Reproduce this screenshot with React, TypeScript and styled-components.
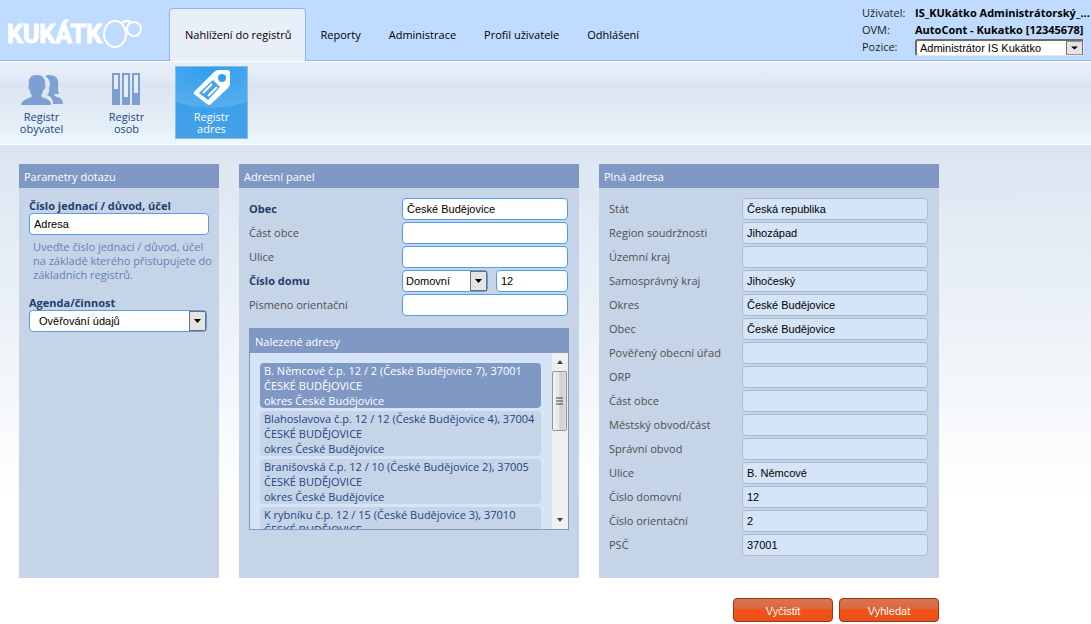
import React, { useId } from 'react';
import styled, { createGlobalStyle, css } from 'styled-components';

const sans = '"Open Sans", "Segoe UI", "Noto Sans", sans-serif';
const arial = '"Liberation Sans", Arial, sans-serif';

const GlobalStyle = createGlobalStyle`
  *, *::before, *::after { box-sizing: border-box; }
  body {
    margin: 0;
    font: 11px/16px ${sans};
    color: #505050;
    background: #fff linear-gradient(#dbe5f1 145px, #fff 500px) no-repeat;
  }
  h2, p, ul { margin: 0; padding: 0; }
  ul { list-style: none; }
`;

const Header = styled.header`
  display: flex;
  align-items: flex-end;
  height: 61px;
  background: #bfdbff;
  border-bottom: 1px solid #8fb4ea;
`;

const Brand = styled.a`
  display: block;
  width: 169px;
  height: 60px;
  flex: none;
`;

const Tabs = styled.nav`
  display: flex;
  flex: 1;
  height: 53px;
  margin-bottom: -1px;
`;

const Tab = styled.a<{ $active?: boolean }>`
  padding: 18px 13px 0;
  border: 1px solid transparent;
  border-bottom: 0;
  border-radius: 4px 4px 0 0;
  color: #000;
  text-decoration: none;
  white-space: nowrap;
  ${p => p.$active && css`
    padding: 18px 14px 0 15px;
    background: #e9eff8;
    border-color: #8fb4ea;
  `}
`;

const Account = styled.dl`
  display: grid;
  grid-template-columns: 53px 169px;
  grid-auto-rows: 17px;
  align-self: flex-start;
  margin: 5px 7px 0 0;
  color: #222;
  dd {
    margin: 0;
    color: #000;
    font-weight: 700;
    white-space: nowrap;
  }
`;

const Toolbar = styled.nav`
  display: flex;
  gap: 12px;
  height: 84px;
  padding: 4px 5px 0;
  background: linear-gradient(#e9eff8, #e2eaf5 16px, #dbe5f1 22px, #e5eff7 66px, #ecf6ff 78px);
  border-top: 1px solid #fff;
  border-bottom: 1px solid #fff;
`;

const Tool = styled.a<{ $active?: boolean }>`
  display: flex;
  flex-direction: column;
  align-items: center;
  width: 73px;
  height: 73px;
  border: 1px solid transparent;
  line-height: 12px;
  text-align: center;
  text-decoration: none;
  color: #1c4587;
  svg { margin-bottom: 4px; }
  ${p => p.$active && css`
    color: #fff;
    border-color: #8ebbe0;
    background:
      radial-gradient(ellipse 70px 41px at 50% 0, rgba(255, 255, 255, 0), rgba(255, 255, 255, 0.14) 98%, rgba(255, 255, 255, 0)) no-repeat,
      linear-gradient(#2f9ff0, #45a1e6);
  `}
`;

const Content = styled.main`
  display: grid;
  grid-template-columns: 200px 340px 340px;
  gap: 20px;
  padding: 19px;
`;

const Panel = styled.section`
  min-height: 414px;
  background: #c5d4e7;
`;

const PanelTitle = styled.h2`
  height: 24px;
  padding: 0 5px;
  font-size: 11px;
  font-weight: 400;
  line-height: 26px;
  color: #fff;
  background: #8099c4;
`;

const PanelBody = styled.div`
  padding: 10px;
`;

const Rows = styled.div<{ $label: number }>`
  display: grid;
  grid-template-columns: ${p => p.$label}px 1fr;
  grid-auto-rows: 22px;
  row-gap: 2px;
  align-items: center;
  padding-right: 1px;
`;

const Label = styled.label<{ $strong?: boolean }>`
  ${p => p.$strong && css`
    font-weight: 700;
    color: #1f3f6e;
  `}
`;

const Field = styled.input`
  width: 100%;
  min-width: 0;
  height: 22px;
  padding: 0 4px;
  border: 1px solid #559cf0;
  border-radius: 4px;
  background: #fff;
  color: #000;
  font: 11px ${arial};
  &:read-only {
    border-color: #a9bcd0;
    background: #d6e4f7;
  }
`;

const Split = styled.div`
  display: grid;
  grid-template-columns: 86px 1fr;
  gap: 8px;
`;

const SelectBox = styled.div<{ $sunken?: boolean }>`
  display: flex;
  position: relative;
  height: ${p => (p.$sunken ? 17 : 22)}px;
  border: 1px solid #559cf0;
  border-radius: 4px;
  background: #fff;
  ${p => p.$sunken && css`
    border: 2px solid #6b6b6b;
    border-right: 1px solid #e8e8e8;
    border-bottom: 1px solid #e8e8e8;
    border-radius: 3px;
  `}
  svg {
    position: absolute;
    top: 0;
    right: 0;
    height: 100%;
    pointer-events: none;
  }
`;

const Select = styled.select<{ $indent: number }>`
  appearance: none;
  width: 100%;
  padding: 0 18px 0 ${p => p.$indent}px;
  border: 0;
  background: transparent;
  color: #000;
  font: 11px ${arial};
`;

const Stack = styled.div`
  display: grid;
  grid-template-columns: minmax(0, 1fr);
  padding-bottom: 13px;
  label { line-height: 15px; }
  ${SelectBox} { margin-right: 2px; }
`;

const Hint = styled.p`
  padding: 5px 0 0 4px;
  line-height: 14px;
  color: #6482b5;
  white-space: nowrap;
`;

const Results = styled.section`
  margin-top: 12px;
  border: 1px solid #8099c4;
  background: #d6e4f7;
`;

const ResultsArea = styled.div`
  display: flex;
  height: 176px;
`;

const ResultList = styled.ul`
  flex: 1;
  display: flex;
  flex-direction: column;
  gap: 3px;
  padding: 10px;
  overflow: hidden;
`;

const Result = styled.button<{ $active?: boolean }>`
  display: block;
  width: 100%;
  height: 45px;
  padding: 0 4px;
  border: 0;
  border-radius: 4px;
  background: ${p => (p.$active ? '#8099c4' : '#c5d4e7')};
  color: ${p => (p.$active ? '#fff' : '#1c4587')};
  font: 11px/15px ${sans};
  text-align: left;
  white-space: nowrap;
`;

const ScrollTrack = styled.div`
  display: flex;
  flex-direction: column;
  width: 17px;
  background: #f0f0f0;
  border-left: 1px solid #e2e2e2;
`;

const ScrollArrow = styled.button`
  height: 18px;
  padding: 0;
  border: 0;
  background: transparent;
  line-height: 0;
`;

const ScrollThumb = styled.div`
  display: grid;
  place-items: center;
  height: 60px;
  margin: 0 1px auto 0;
  border: 1px solid #959595;
  border-radius: 2px;
  background: linear-gradient(90deg, #f4f4f4, #e6e6e6 45%, #cfcfcf 55%, #dcdcdc);
`;

const Actions = styled.div`
  grid-column: 1 / -1;
  display: flex;
  justify-content: flex-end;
  gap: 6px;
`;

const Action = styled.button`
  width: 100px;
  height: 24px;
  padding: 2px 0 0;
  border: 1px solid #a3320f;
  border-radius: 4px;
  background: linear-gradient(#d97450, #d8693f 42%, #f94f14 50%, #e2541f);
  color: #fff;
  font: 11px ${arial};
`;

const Logo = () => (
  <svg width="150" height="60" role="img" aria-label="Kukátko">
    <text
      x="7"
      y="43"
      fill="#fff"
      stroke="#fff"
      strokeWidth="1"
      fontFamily="Roboto, sans-serif"
      fontSize="25"
      fontWeight="700"
    >
      KUKÁTK
    </text>
    <g fill="none" stroke="#fff" strokeWidth="2">
      <path d="M121 24q4-5 10-2" />
      <ellipse cx="115" cy="34" rx="11" ry="13" />
      <circle cx="134" cy="29" r="7" />
    </g>
  </svg>
);

const PeopleIcon = () => (
  <svg width="42" height="40" viewBox="0 0 42 40" fill="#7d9fd2">
    <path d="M24 9q2-1 4-1 8 0 9 6c1 5-1 8 1 13h-5q0 2 3 3 6 1 6 7H32q0-7-6-9 3-3 2-7 1-2 1-5-1-5-5-7z" />
    <path d="M8 18c-1-7 2-10 8-10 5 0 9 3 8 10 1 2 0 5-2 5 0 3-1 4-2 6 2 3 10 2 10 9H0c0-6 9-6 11-9-1-2-2-3-2-6-2 0-2-4-1-5z" />
  </svg>
);

const BindersIcon = () => (
  <svg width="30" height="40" viewBox="0 0 30 40">
    {[0, 10, 20].map((x, i) => (
      <g key={x}>
        <rect x={x} y="6" width="8" height="32" fill="#7d9fd2" />
        <rect x={x + 2} y="8" width="4" height={[14, 22, 18][i]} fill="#e4ecf6" />
      </g>
    ))}
  </svg>
);

const TagIcon = () => (
  <svg width="38" height="40" viewBox="0 0 38 40">
    <path d="M1 25L21 5Q23 3 26 3h8q3 0 3 3v10q0 3-2 5L18 37q-2 2-4 0L1 27q-1-1 0-2z" fill="#fff" />
    <circle cx="29" cy="11" r="4" fill="#35a0ee" />
    <path d="M6 26L20 13 27 20 15 33z" fill="#42a4ec" />
    <path d="M10 26l9-9M15 29l9-9" stroke="#fff" strokeWidth="2" />
  </svg>
);

const DropArrow = () => (
  <svg width="17" height="20" viewBox="0 0 17 20" preserveAspectRatio="none">
    <rect x="0.5" y="0.5" width="16" height="19" fill="#e4e4e4" stroke="#707070" />
    <path d="M5 8h7l-3.500 4z" fill="#000" />
  </svg>
);

const Triangle = ({ down }: { down?: boolean }) => (
  <svg width="8" height="4" viewBox="0 0 8 4">
    <path d={down ? 'M1 0h6L4 4z' : 'M1 4h6L4 0z'} fill="#444" />
  </svg>
);

interface SelectorProps { id: string; value: string; indent: number; sunken?: boolean; name?: string }

const Selector = ({ id, value, indent, sunken, name }: SelectorProps) => (
  <SelectBox $sunken={sunken}>
    <Select id={id} $indent={indent} aria-label={name}><option>{value}</option></Select>
    <DropArrow />
  </SelectBox>
);

interface FieldRowProps { label: string; value?: string; strong?: boolean; readOnly?: boolean }

const FieldRow = ({ label, value = '', strong, readOnly }: FieldRowProps) => {
  const id = useId();
  return (
    <>
      <Label htmlFor={id} $strong={strong}>{label}</Label>
      <Field id={id} defaultValue={value} readOnly={readOnly} />
    </>
  );
};

const tabs = ['Nahlížení do registrů', 'Reporty', 'Administrace', 'Profil uživatele', 'Odhlášení'];

const results = [
  'B. Němcové č.p. 12 / 2 (České Budějovice 7), 37001',
  'Blahoslavova č.p. 12 / 12 (České Budějovice 4), 37004',
  'Branišovská č.p. 12 / 10 (České Budějovice 2), 37005',
  'K rybníku č.p. 12 / 15 (České Budějovice 3), 37010',
];

const address: [string, string][] = [
  ['Stát', 'Česká republika'],
  ['Region soudržnosti', 'Jihozápad'],
  ['Územní kraj', ''],
  ['Samosprávný kraj', 'Jihočeský'],
  ['Okres', 'České Budějovice'],
  ['Obec', 'České Budějovice'],
  ['Pověřený obecní úřad', ''],
  ['ORP', ''],
  ['Část obce', ''],
  ['Městský obvod/část', ''],
  ['Správní obvod', ''],
  ['Ulice', 'B. Němcové'],
  ['Číslo domovní', '12'],
  ['Číslo orientační', '2'],
  ['PSČ', '37001'],
];

export default function App() {
  return (
    <>
      <GlobalStyle />
      <Header>
        <Brand href="#"><Logo /></Brand>
        <Tabs>
          {tabs.map((tab, i) => <Tab key={tab} href="#" $active={i === 0}>{tab}</Tab>)}
        </Tabs>
        <Account>
          <dt>Uživatel:</dt><dd>IS_KUkátko Administrátorský_...</dd>
          <dt>OVM:</dt><dd>AutoCont - Kukatko [12345678]</dd>
          <dt><label htmlFor="position">Pozice:</label></dt>
          <dd><Selector id="position" value="Administrátor IS Kukátko" indent={3} sunken /></dd>
        </Account>
      </Header>
      <Toolbar>
        <Tool href="#"><PeopleIcon />Registr<br />obyvatel</Tool>
        <Tool href="#"><BindersIcon />Registr<br />osob</Tool>
        <Tool href="#" $active><TagIcon />Registr<br />adres</Tool>
      </Toolbar>
      <Content>
        <Panel>
          <PanelTitle>Parametry dotazu</PanelTitle>
          <PanelBody>
            <Stack>
              <Label htmlFor="reason" $strong>Číslo jednací / důvod, účel</Label>
              <Field id="reason" defaultValue="Adresa" />
              <Hint>Uveďte číslo jednací / důvod, účel<br />na základě kterého přistupujete do<br />základních registrů.</Hint>
            </Stack>
            <Stack>
              <Label htmlFor="agenda" $strong>Agenda/činnost</Label>
              <Selector id="agenda" value="Ověřování údajů" indent={9} />
            </Stack>
          </PanelBody>
        </Panel>
        <Panel>
          <PanelTitle>Adresní panel</PanelTitle>
          <PanelBody>
            <Rows $label={153}>
              <FieldRow label="Obec" value="České Budějovice" strong />
              <FieldRow label="Část obce" />
              <FieldRow label="Ulice" />
              <Label htmlFor="house" $strong>Číslo domu</Label>
              <Split>
                <Selector id="house-kind" name="Druh čísla" value="Domovní" indent={3} />
                <Field id="house" defaultValue="12" />
              </Split>
              <FieldRow label="Písmeno orientační" />
            </Rows>
            <Results>
              <PanelTitle>Nalezené adresy</PanelTitle>
              <ResultsArea>
                <ResultList>
                  {results.map((line, i) => (
                    <li key={line}>
                      <Result $active={i === 0}>{line}<br />ČESKÉ BUDĚJOVICE<br />okres České Budějovice</Result>
                    </li>
                  ))}
                </ResultList>
                <ScrollTrack>
                  <ScrollArrow aria-label="Nahoru"><Triangle /></ScrollArrow>
                  <ScrollThumb>
                    <svg width="7" height="8"><path d="M0 1h7M0 4h7M0 7h7" stroke="#444" /></svg>
                  </ScrollThumb>
                  <ScrollArrow aria-label="Dolů"><Triangle down /></ScrollArrow>
                </ScrollTrack>
              </ResultsArea>
            </Results>
          </PanelBody>
        </Panel>
        <Panel>
          <PanelTitle>Plná adresa</PanelTitle>
          <PanelBody>
            <Rows $label={133}>
              {address.map(([label, value]) => <FieldRow key={label} label={label} value={value} readOnly />)}
            </Rows>
          </PanelBody>
        </Panel>
        <Actions>
          <Action>Vyčistit</Action>
          <Action>Vyhledat</Action>
        </Actions>
      </Content>
    </>
  );
}
